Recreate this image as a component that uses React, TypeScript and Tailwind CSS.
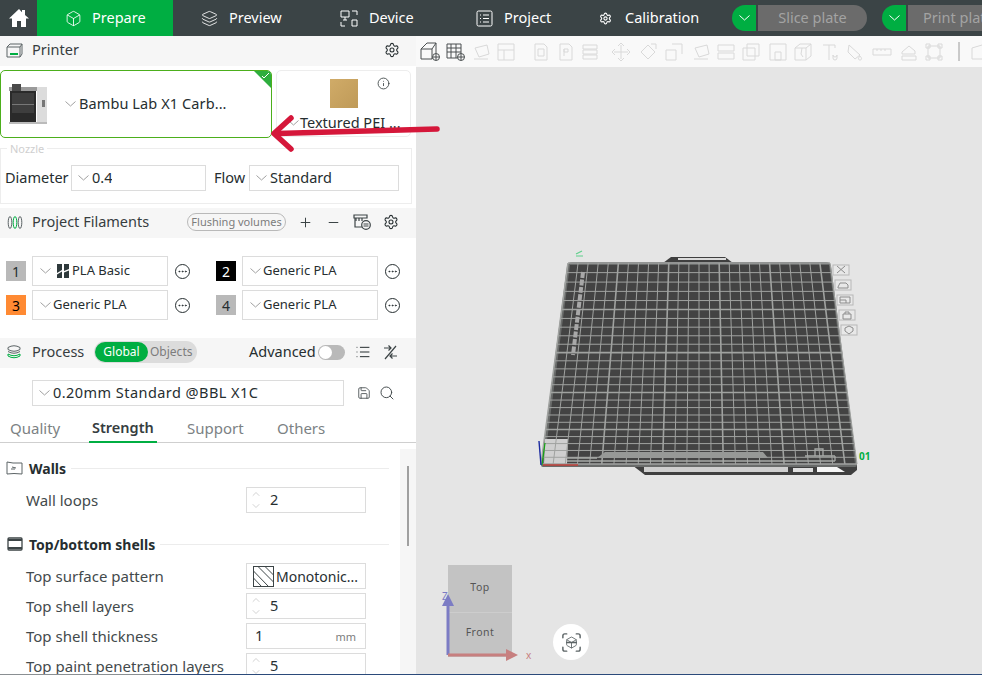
import { Info, Minus, Plus, Save, Search, Settings, List, Layers, Box, Ellipsis, ScanLine, ChevronUp, ChevronDown } from "lucide-react";

const font = { fontFamily: '"Noto Sans", "Liberation Sans", sans-serif' };

function Chev({ light }: { light?: boolean }) {
  return (
    <svg className="shrink-0" width="11" height="6" viewBox="0 0 11 6" fill="none" stroke={light ? "#ffffff" : "#a0a0a0"}>
      <path d="M.5.5l5 4.500 5-4.500" />
    </svg>
  );
}

function Arrow() {
  return (
    <svg className="absolute left-[265px] top-[110px] z-20" width="175" height="44" viewBox="0 0 175 44" fill="none">
      <path d="M172 19 L12 23.500" stroke="#d5173a" strokeWidth="5.500" strokeLinecap="round" />
      <path d="M26 8 L9 23.500 L26 39" stroke="#d5173a" strokeWidth="5.500" strokeLinecap="round" strokeLinejoin="round" />
    </svg>
  );
}

function Pick({ w, text, track = "" }: { w: string; text: string; track?: string }) {
  return (
    <div className={`flex h-[26px] items-center border border-[#dcdcdc] bg-white pl-[6px] text-[14.5px] text-[#262e30] ${w}`}>
      <Chev />
      <span className={`ml-[3px] truncate ${track}`}>{text}</span>
    </div>
  );
}

function Filament({ n, bg, fg, text, icon }: { n: number; bg: string; fg: string; text: string; icon?: boolean }) {
  return (
    <div className="flex items-center">
      <div className={`flex h-5 w-5 items-center justify-center text-[14px] ${bg} ${fg}`}>{n}</div>
      <div className="ml-[6px] flex h-[30px] w-[136px] items-center border border-[#dcdcdc] bg-white pl-[7px] text-[13px] text-[#262e30]">
        <Chev />
        {icon ? (
          <svg className="ml-[6px] mr-[3px]" width="12" height="14" viewBox="0 0 12 14">
            <path d="M0 0h5v6L0 9zM7 0h5v5L7 7zM0 10.500l5-3V14H0zM7 8.500l5-2V14H7z" fill="#2f3a3c" />
          </svg>
        ) : (
          <span className="w-[2px]" />
        )}
        <span>{text}</span>
      </div>
      <Ellipsis className="ml-[7px] h-[15px] w-[15px] rounded-full border border-[#262e30] p-[1px] text-[#262e30]" strokeWidth={2} />
    </div>
  );
}

function Heading({ title, icon, top }: { title: string; icon: React.ReactNode; top: string }) {
  return (
    <div className={`flex h-5 items-center ${top}`}>
      <div className="flex w-[21px] justify-center">{icon}</div>
      <div className="ml-[4px] text-[14px] font-bold text-[#262e30]">{title}</div>
      <div className="ml-[5px] h-px flex-1 bg-[#ececec]" />
    </div>
  );
}

function Row({ label, children, top = "mt-1" }: { label: string; children: React.ReactNode; top?: string }) {
  return (
    <div className={`flex h-[26px] items-center text-[15px] text-[#434a4c] ${top}`}>
      <div className="ml-[22px] w-[220px] whitespace-nowrap">{label}</div>
      <div className="flex h-[26px] w-[120px] shrink-0 items-center border border-[#dcdcdc] bg-white text-[14.5px] text-[#262e30]">{children}</div>
    </div>
  );
}

function Spinner({ v }: { v: number }) {
  return (
    <>
      <div className="ml-[2px] mr-[8px] flex w-[13px] flex-col items-center text-[#b5b5b5]">
        <ChevronUp className="h-3 w-3" strokeWidth={1.2} />
        <ChevronDown className="h-3 w-3" strokeWidth={1.2} />
      </div>
      {v}
    </>
  );
}

function Left() {
  return (
    <div className="relative flex w-[416px] shrink-0 flex-col overflow-hidden bg-white">
      <div className="flex h-[30px] items-center justify-between bg-[#f6f6f6] pb-[2px] pl-[6px] pr-[16px] text-[14.5px] text-[#363d3f]">
        <div className="flex items-center">
          <svg width="17" height="15" viewBox="0 0 17 15" fill="none" stroke="#5c6466" strokeWidth="1">
            <path d="M4 1h12v10l-2 3H1V4zM1 4h13v10M14 4l2-3" />
            <path d="M4 11h8" stroke="#00ae42" strokeWidth="2" />
          </svg>
          <span className="ml-[9px]">Printer</span>
        </div>
        <Settings className="h-4 w-4 text-[#262e30]" strokeWidth={1.6} />
      </div>

      <div className="mt-1 flex pr-[5px]">
        <div className="relative flex h-[68px] w-[272px] items-center overflow-hidden rounded-[5px] border border-[#4caf1c] bg-white">
          <svg className="ml-[8px] shrink-0" width="38" height="40" viewBox="0 0 38 40">
            <path d="M0 3h28v4H0z" fill="#9a9a9a" />
            <path d="M3 0h9v7H3z" fill="#4a4a4a" />
            <path d="M1 7h26v31H1z" fill="#2a2a2a" />
            <path d="M3 9h22v20H3z" fill="#3e3e3e" />
            <path d="M3 20h22v1H3z" fill="#777777" />
            <path d="M28 3h10v36H28z" fill="#dcdcdc" />
            <path d="M33 16h3v7h-3z" fill="#777777" />
            <path d="M0 38h38v2H0z" fill="#bbbbbb" />
          </svg>
          <span className="ml-[18px]">
            <Chev />
          </span>
          <span className="ml-[3px] text-[14.5px] tracking-[0.1px] text-[#262e30]">Bambu Lab X1 Carb...</span>
          <div className="absolute right-0 top-0 h-0 w-0 border-l-[17px] border-t-[17px] border-l-transparent border-t-[#2eae3e]" />
          <svg className="absolute right-[1px] top-[1px]" width="9" height="7" viewBox="0 0 9 7" fill="none" stroke="white">
            <path d="M1 4l2 2 5-5" />
          </svg>
        </div>
        <div className="relative ml-[4px] flex h-[67px] w-[135px] flex-col items-center rounded-[5px] border border-[#ededed] bg-white">
          <div className="mt-[8px] h-[29px] w-[28px] bg-gradient-to-br from-[#d0ab68] to-[#bf9a58]" />
          <Info className="absolute right-[20px] top-[6px] h-[13px] w-[13px] text-[#3c4446]" strokeWidth={1.6} />
          <div className="mt-[4px] flex w-full items-center pl-[11px] text-[14.5px] text-[#262e30]">
            <Chev />
            <span className="ml-[1px] whitespace-nowrap">Textured PEI ...</span>
          </div>
        </div>
      </div>

      <div className="relative mr-[4px] mt-[10px] flex h-[56px] items-start border border-[#ededed] pl-[4px] pt-[16px] text-[14.5px] text-[#262e30]">
        <div className="absolute left-[6px] top-[-8px] bg-white px-[3px] text-[11px] text-[#cfcfcf]">Nozzle</div>
        <span className="w-[66px] leading-[24px]">Diameter</span>
        <Pick w="w-[135px]" text="0.4" />
        <span className="ml-[8px] w-[35px] leading-[24px]">Flow</span>
        <Pick w="w-[150px]" text="Standard" />
      </div>

      <div className="mt-[4px] flex h-[30px] items-center bg-[#f6f6f6] pb-[2px] pl-[7px] text-[14.5px] text-[#363d3f]">
        <svg width="16" height="15" viewBox="0 0 16 15" fill="none" stroke="#5c6466">
          <ellipse cx="3" cy="7.500" rx="1.800" ry="6" />
          <ellipse cx="8" cy="7.500" rx="1.800" ry="6" stroke="#00ae42" />
          <ellipse cx="13" cy="7.500" rx="1.800" ry="6" />
        </svg>
        <span className="ml-[9px] w-[155px]">Project Filaments</span>
        <div className="flex h-[18px] w-[99px] items-center justify-center rounded-full border border-[#b9b9b9] text-[11px] text-[#7c7c7c]">Flushing volumes</div>
        <Plus className="ml-[12px] h-[15px] w-[15px] text-[#3c4446]" strokeWidth={1.6} />
        <Minus className="ml-[13px] h-[15px] w-[15px] text-[#3c4446]" strokeWidth={1.6} />
        <svg className="ml-[12px]" width="18" height="16" viewBox="0 0 18 16" fill="none" stroke="#3c4446" strokeWidth="1.2">
          <path d="M1 1h13v3H1zM2 4v9h7" />
          <path d="M3 4v3M6 4v3M9 4v3" />
          <circle cx="13" cy="11" r="4.300" />
          <path d="M10.500 10h5M10.500 12h5" />
        </svg>
        <Settings className="ml-[12px] h-4 w-4 text-[#262e30]" strokeWidth={1.6} />
      </div>

      <div className="mt-[18px] grid grid-cols-[210px_1fr] gap-y-[4px] pl-[6px]">
        <Filament n={1} bg="bg-[#b9b9b9]" fg="text-[#262e30]" text="PLA Basic" icon />
        <Filament n={2} bg="bg-black" fg="text-white" text="Generic PLA" />
        <Filament n={3} bg="bg-[#ff8a33]" fg="text-black" text="Generic PLA" />
        <Filament n={4} bg="bg-[#b9b9b9]" fg="text-[#262e30]" text="Generic PLA" />
      </div>

      <div className="mt-[18px] flex h-[30px] items-center bg-[#f6f6f6] pb-[2px] pl-[6px] text-[14.5px] text-[#363d3f]">
        <svg width="16" height="16" viewBox="0 0 16 16" fill="none" stroke="#5c6466">
          <path d="M2 3.500Q8 0 14 3.500v2Q8 9 2 5.500zM2 7.500q6 3.500 12 0" />
          <path d="M2 10q6 3.500 12 0v2q-6 3.500-12 0z" stroke="#00ae42" />
        </svg>
        <span className="ml-[10px] w-[62px]">Process</span>
        <div className="flex h-[22px] w-[103px] items-center rounded-full bg-[#dcdcdc] p-[1px] text-[12px]">
          <span className="flex h-5 w-[53px] items-center justify-center rounded-full bg-[#00ae42] text-white">Global</span>
          <span className="ml-[2px] text-[#7c7c7c]">Objects</span>
        </div>
        <span className="ml-[52px] text-[#262e30]">Advanced</span>
        <div className="ml-[2px] flex h-[15px] w-[27px] items-center rounded-full bg-[#b9b9b9] pl-[1px]">
          <div className="h-[13px] w-[13px] rounded-full bg-white" />
        </div>
        <List className="ml-[10px] h-4 w-4 text-[#262e30]" strokeWidth={1.5} />
        <svg className="ml-[12px]" width="15" height="15" viewBox="0 0 15 15" fill="none" stroke="#3c4446" strokeWidth="1.200">
          <path d="M13 1L2 14M1 3h7M5.500 .5L8 3 5.500 5.500M14 11H7M9.500 8.500L7 11l2.500 2.500" />
        </svg>
      </div>

      <div className="mt-[12px] flex items-center pl-[32px]">
        <Pick w="w-[312px]" text="0.20mm Standard @BBL X1C" track="tracking-[0.45px]" />
        <Save className="ml-[13px] h-[14px] w-[14px] text-[#3c4446]" strokeWidth={1.4} />
        <Search className="ml-[8px] h-4 w-4 text-[#3c4446]" strokeWidth={1.4} />
      </div>

      <div className="mt-[9px] flex h-[28px] items-center border-b border-[#cfcfcf] pb-[1px] pl-[10px] text-[15px] text-[#7c8284]">
        <span className="w-[82px]">Quality</span>
        <span className="relative w-[95px] text-[14.500px] font-semibold text-[#363d3f]">
          Strength
          <span className="absolute left-[-3px] top-[24px] block h-[2px] w-[68px] bg-[#00ae42]" />
        </span>
        <span className="w-[90px]">Support</span>
        <span>Others</span>
      </div>

      <div className="flex min-h-0 flex-1 pt-[6px]">
        <div className="w-[400px] pl-[4px] pr-[11px]">
          <Heading
            title="Walls"
            top="mt-[9px]"
            icon={
              <svg width="17" height="14" viewBox="0 0 17 14" fill="none" stroke="#5c6466">
                <path d="M1 1l6 1h9v11l-8-.5L1 13zM6 6l4 1M5 8h4" />
              </svg>
            }
          />
          <Row label="Wall loops" top="mt-[9px]">
            <Spinner v={2} />
          </Row>
          <Heading
            title="Top/bottom shells"
            top="mt-[21px]"
            icon={
              <svg width="16" height="14" viewBox="0 0 16 14" fill="none" stroke="#3c4446" strokeWidth="1.300">
                <rect x="1" y="1" width="14" height="12" rx="1" />
                <path d="M1 3h14M1 11h14" strokeWidth="2" />
              </svg>
            }
          />
          <Row label="Top surface pattern" top="mt-[9px]">
            <svg className="ml-[6px] shrink-0" width="21" height="21" viewBox="0 0 21 21" fill="none" stroke="#3c4446">
              <rect x=".5" y=".5" width="20" height="20" />
              <path d="M.5 5l15 15.500M.5 12l8 8.500M5 .5l15.500 15.500M12 .5l8.500 8.500" />
            </svg>
            <span className="ml-[2px] text-[14px]">Monotonic...</span>
          </Row>
          <Row label="Top shell layers">
            <Spinner v={5} />
          </Row>
          <Row label="Top shell thickness">
            <span className="ml-2 flex-1">1</span>
            <span className="mr-[9px] mt-[3px] text-[11px] text-[#7c7c7c]">mm</span>
          </Row>
          <Row label="Top paint penetration layers">
            <Spinner v={5} />
          </Row>
        </div>
        <div className="relative w-[16px] bg-[#f6f6f6]">
          <div className="absolute left-[7px] top-[17px] h-[80px] w-[2px] bg-[#a0a0a0]" />
        </div>
      </div>
    </div>
  );
}

// bed corners on screen, with the far edge narrower than the near one
const P = { tl: [568, 263], tr: [830, 263], bl: [541, 464], br: [857, 464] };
const far = 262 / 316;
const proj = (s: number) => s / ((1 - s) * far + s);
const lerp = (a: number, b: number, t: number) => a + (b - a) * t;

const badges = [
  "M4 1l8 7m0-7L4 8",
  "M3 7l2-4h6l2 2v3H3z",
  "M3 2h10v6H3zM3 5h6v3",
  "M4 4h8v5H4zM6 4V2h4v2",
  "M8 1l4 2v3l-4 3-4-3V3z",
];

function Bed() {
  const cols = Array.from({ length: 27 }, (_, i) => i);
  const rows = Array.from({ length: 26 }, (_, i) => i);
  return (
    <svg className="absolute left-0 top-0" width="566" height="639" viewBox="416 36 566 639" fill="none">
      <path d="M663 263l8-6h54l8 6z" fill="#3f3f3f" />
      <path d="M678 258h48v2h-48z" fill="#dcdcdc" />
      <path d="M632 465l13 10h206l6-5v-6z" fill="#3f3f3f" />
      <path d="M567 266q1-4 5-4h254q4 0 5 4l26 199q0 2-2 2H543q-2 0-2-2z" fill="#6a6c6b" />
      <path d="M570 265h259l26 199H544z" fill="#434343" />
      <path d="M545 439h23l-1 25h-23z" fill="#cfcfcf" />
      {cols.map((i) => {
        const t = i / 26;
        return <line key={i} x1={lerp(P.tl[0], P.tr[0], t)} y1={P.tl[1]} x2={lerp(P.bl[0], P.br[0], t)} y2={P.bl[1]} stroke="#a0a2a0" strokeWidth={i % 5 === 0 ? 1.6 : 1} />;
      })}
      {rows.map((i) => {
        const t = proj(i / 25);
        const y = lerp(263, 464, t);
        return <line key={i} x1={lerp(P.tl[0], P.bl[0], t)} y1={y} x2={lerp(P.tr[0], P.br[0], t)} y2={y} stroke="#a0a2a0" strokeWidth={i % 5 === 0 ? 1.6 : 1} />;
      })}
      <path d="M597 458l8-6h158l5 6z" fill="#979997" />
      <path d="M567 458h30M567 461h268M835 461v-5M805 456h30M815 456v-7h8v7" stroke="#a8aaa8" strokeWidth="1.300" />
      <path d="M644 467h144v5H644z" fill="#cfcfcf" />
      <path d="M793 468h20v4h-20z" fill="#e0e0e0" />
      <path d="M817 467h20l8 5h-28z" fill="#f6f6f6" />
      <path d="M583 272l-10 83" stroke="#a8a8a8" strokeWidth="4" strokeDasharray="6 1.500" />
      <path d="M542 465l3-22" stroke="#13a613" strokeWidth="1.200" />
      <path d="M541 465l-2-24" stroke="#1b2aa0" strokeWidth="1.400" />
      <path d="M543 465h35" stroke="#c0403a" strokeWidth="1.600" />
      <path d="M576 254l6-3M576 256h7" stroke="#5fd08b" strokeWidth="1.200" />
      <text x="859" y="460" fontSize="10" fontWeight="700" fill="#00ae42">01</text>
      {badges.map((d, i) => (
        <g key={i} transform={`translate(${833 + i * 2} ${265 + i * 15})`}>
          <rect width="16" height="10" fill="#e8e8e8" stroke="#b8b8b8" />
          <path d={d} stroke="#8c8c8c" />
        </g>
      ))}
    </svg>
  );
}

// toolbar glyphs, dark ones are enabled; x is the distance from the first slot
const tools: { x: number; d: string }[] = [
  { x: 0, d: "M0 7l6-6h9v11l-4 5H0zM0 7h11v10M11 7l4-6" },
  { x: 25, d: "M1 2h14v14H1zM1 6h14M1 10h14M5 2v14M10 2v14" },
  { x: 50, d: "M4 6l12-3 2 9-10 3zM3 17h14" },
  { x: 75, d: "M2 2h16v16H2zM2 8h16M8 8v10" },
  { x: 109, d: "M5 2h9l3 3v13H5zM8 7h6v7H8z" },
  { x: 134, d: "M5 2h9l3 3v13H5zM9 7h4v3H9zM9 7v7" },
  { x: 159, d: "M3 3h14v4H3zM3 8h14v4H3zM3 13h14v4H3z" },
  { x: 190, d: "M10 3v14M3 10h14M7 4l3-3 3 3M7 16l3 3 3-3M4 7l-3 3 3 3M16 7l3 3-3 3" },
  { x: 217, d: "M10 3l7 7-7 7-7-7zM13 2h5v5" },
  { x: 243, d: "M2 8h10v10H2zM8 2h10v10" },
  { x: 270, d: "M4 6l12-3 2 9-10 3zM3 17h14" },
  { x: 295, d: "M2 3h16v6H2zM2 11h16v6H2z" },
  { x: 320, d: "M2 6h12v12H2zM6 2h12v12H6z" },
  { x: 347, d: "M2 2h16v16H2zM7 10h6v8H7z" },
  { x: 372, d: "M2 6l5-4h11v12l-5 4H2zM2 6h11v12M13 6l5-4M9 6l-1 6 2 3" },
  { x: 399, d: "M3 3h12v3M9 3v15M13 13a2 2 0 1 0 4 0v3a2 2 0 1 1-4 0z" },
  { x: 424, d: "M4 3l11 10-5 4-7-7zM15 14c2 2 2 4 0 4s-2-2 0-4z" },
  { x: 451, d: "M1 7h18v6H1zM5 7v2M9 7v2M13 7v2" },
  { x: 478, d: "M3 10l7-6 6 5v3H3zM3 14h14v4H3z" },
  { x: 503, d: "M4 4h12v12H4zM2 2h4v4H2zM14 2h4v4h-4zM2 14h4v4H2zM14 14h4v4h-4z" },
  { x: 548, d: "M3 6l10-3 4 4v10H3z" },
];

function ToolGlyphs() {
  return (
    <svg className="absolute left-0 top-0" width="566" height="31" viewBox="0 0 566 31" fill="none">
      {tools.map((t, i) => (
        <path key={i} transform={`translate(${t.x + 5} 6)`} d={t.d} stroke={i < 2 ? "#4a4f50" : "#d9d9d9"} strokeWidth="1" />
      ))}
      <g stroke="#4a4f50">
        <circle cx="20" cy="21" r="3.500" fill="#f9f9f9" />
        <path d="M17 21h6M20 18v6" />
        <circle cx="45" cy="21" r="3.500" fill="#f9f9f9" />
        <path d="M42 21h6M45 18v6" />
      </g>
      <path d="M543 6v19" stroke="#9a9a9a" />
    </svg>
  );
}

function Viewport() {
  return (
    <div className="relative flex-1 overflow-hidden bg-[#e5e5e5]">
      <div className="relative h-[31px] bg-[#f9f9f9]">
        <ToolGlyphs />
      </div>
      <Bed />
      {/* orientation cube sits on the free canvas */}
      <div className="absolute left-[32px] top-[529px] flex h-[92px] w-[64px] flex-col bg-[#c3c3c3] text-center text-[10.500px] tracking-[0.5px] text-[#555]">
        <div className="h-[48px] border-b border-[#cdcdcd] pt-[17px] leading-none">Top</div>
        <div className="mt-[14px] leading-none">Front</div>
      </div>
      <svg className="absolute left-[20px] top-[556px]" width="100" height="76" viewBox="0 0 100 76" fill="none">
        <path d="M12 10v53" stroke="#7c7cc4" strokeWidth="3" />
        <path d="M6 14L12 2l6 12z" fill="#7c7cc4" />
        <path d="M12 63h62" stroke="#c77f7f" strokeWidth="3" />
        <path d="M70 57l12 6-12 6z" fill="#c77f7f" />
      </svg>
      <span className="absolute left-[26px] top-[555px] text-[10px] leading-none text-[#7c7cc4]">Z</span>
      <span className="absolute left-[110px] top-[614px] text-[10px] leading-none text-[#c77f7f]">x</span>
      <div className="absolute left-[137px] top-[588px] flex h-9 w-9 items-center justify-center rounded-full bg-white">
        <ScanLine className="absolute h-[23px] w-[23px] text-[#5c6466]" strokeWidth={1.5} />
        <Box className="h-[13px] w-[13px] text-[#5c6466]" strokeWidth={1.6} />
      </div>
    </div>
  );
}

function Tab({ icon, label, w }: { icon: React.ReactNode; label: string; w: string }) {
  return (
    <div className={`flex h-full shrink-0 items-center pl-[28px] ${w}`}>
      {icon}
      <span className="ml-[11px]">{label}</span>
    </div>
  );
}

function TopBar() {
  return (
    <div className="flex h-9 shrink-0 items-center overflow-hidden bg-[#3b4446] text-[14.5px] text-white">
      <div className="flex w-[37px] shrink-0 justify-center">
        <svg width="20" height="20" viewBox="0 0 20 20" fill="white">
          <path d="M10 1L0 10.500h3V19h5v-6h4v6h5v-8.500h3L16 7V2h-3v2.200z" />
        </svg>
      </div>
      <div className="flex h-full w-[136px] shrink-0 items-center bg-[#00ae42] pl-[28px]">
        <Box className="h-[17px] w-[17px]" strokeWidth={1.2} />
        <span className="ml-[10px]">Prepare</span>
      </div>
      <Tab w="w-[139px]" label="Preview" icon={<Layers className="h-[17px] w-[17px]" strokeWidth={1.2} />} />
      <Tab
        w="w-[136px]"
        label="Device"
        icon={
          <svg width="18" height="17" viewBox="0 0 18 17" fill="none" stroke="white">
            <path d="M1 1h8v6H1zM3 10h4M5 7v3M12 1h5v4M1 12v4h4M12 16h5v-6h-5z" />
          </svg>
        }
      />
      <Tab
        w="w-[123px]"
        label="Project"
        icon={
          <svg width="17" height="17" viewBox="0 0 17 17" fill="none" stroke="white">
            <rect x="1" y="1" width="15" height="15" rx="1.500" />
            <path d="M4 5h1M7 5h6M4 8.500h1M7 8.500h6M4 12h1M7 12h6" />
          </svg>
        }
      />
      <Tab w="w-[161px]" label="Calibration" icon={<Settings className="mr-[2px] h-[13px] w-[13px]" strokeWidth={2} />} />
      <div className="flex h-[26px] shrink-0 items-center text-[#a3a3a3]">
        <div className="flex h-full w-[24px] items-center justify-center rounded-l-full bg-[#00ae42]">
          <Chev light />
        </div>
        <div className="ml-[2px] flex h-full w-[109px] items-center justify-center rounded-r-full bg-[#6b6b6b]">Slice plate</div>
        <div className="ml-[15px] flex h-full w-[24px] items-center justify-center rounded-l-full bg-[#00ae42]">
          <Chev light />
        </div>
        <div className="ml-[2px] flex h-full w-[90px] items-center whitespace-nowrap bg-[#6b6b6b] pl-[15px]">Print plate</div>
      </div>
    </div>
  );
}

export default function App() {
  return (
    <div className="relative flex h-[675px] w-[982px] flex-col overflow-hidden bg-white" style={font}>
      <TopBar />
      <div className="flex min-h-0 flex-1">
        <Left />
        <Viewport />
      </div>
      <Arrow />
      <div className="absolute bottom-0 left-0 h-px w-[160px] bg-[#8a8f92]" />
      <div className="absolute bottom-0 left-[160px] right-0 h-px bg-[#2b4a7a]" />
    </div>
  );
}
